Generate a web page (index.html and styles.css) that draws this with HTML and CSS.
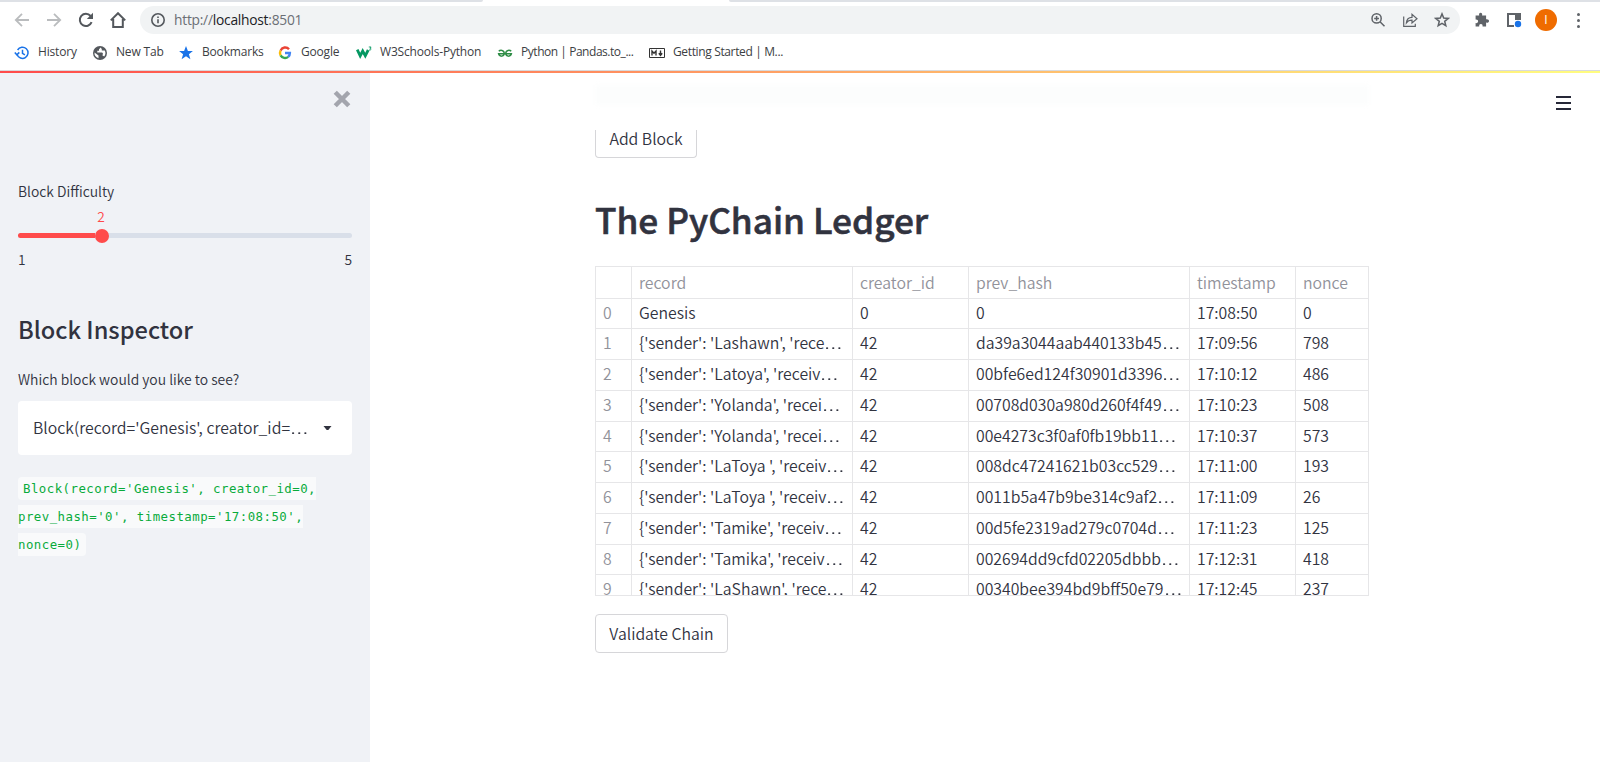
FILE: index.html
```html
<!DOCTYPE html>
<html lang="en">
<head>
<meta charset="utf-8">
<title>PyChain</title>
<link rel="stylesheet" href="styles.css">
</head>
<body>
<div class="tabstrip"><div class="tab-side tab-left"></div><div class="tab-gap"></div><div class="tab-side tab-right"></div></div>
<div class="toolbar">
  <svg class="ic nav-off" viewBox="0 0 16 16"><path d="M15 8H2M8 1.8 1.8 8 8 14.2"/></svg>
  <svg class="ic nav-off" viewBox="0 0 16 16"><path d="M1 8h13M8 1.8 14.2 8 8 14.2"/></svg>
  <svg class="ic nav" viewBox="0 0 16 16"><path d="M13.600 10.200A6.1 6.1 0 1 1 12.6 4"/><path class="fill" d="M15 .8V7H8.8z"/></svg>
  <svg class="ic nav" viewBox="0 0 16 16"><path d="M.8 8.4 8 1.2l7.2 7.2M3.2 7v8h9.6V7"/></svg>
  <div class="omnibox">
    <svg class="info" viewBox="0 0 16 16"><circle cx="8" cy="8" r="6.2"/><path d="M8 7.2v4M8 4.4v1.7"/></svg>
    <div class="url">http://<b>localhost</b>:8501</div>
    <svg class="oi" viewBox="0 0 16 16"><circle cx="6.6" cy="6.4" r="4.6"/><path d="M10 9.8l4.5 4.5M4.2 6.4H9M6.6 4v4.8"/></svg>
    <svg class="oi share" viewBox="0 0 16 16"><path d="M1.7 4.6v9.7h11.6v-2.6M4.4 10.8c.3-3.7 2.2-5.4 5.6-5.5V2.4L15 6.700l-5 4.200V8.200c-2.400 0-4.200.6-5.600 2.600z"/></svg>
    <svg class="oi star" viewBox="0 0 16 16"><path d="M8 1.900 9.700 6.100l4.500.3-3.500 2.900 1.100 4.400L8 11.300l-3.800 2.400 1.100-4.400L1.800 6.400l4.500-.3z"/></svg>
  </div>
  <svg class="ext" viewBox="0 0 16 16"><path d="M1.600 3.500h3.600C4.700 1.700 5.400.7 6.600.7S8.500 1.700 8.100 3.500h4v3.700c1.900-.3 2.900.5 2.900 1.700s-1 2-2.900 1.700v4H8.600c.2-1.800-.5-2.600-1.700-2.600s-1.900.8-1.700 2.600H1.600v-3.500c1.700.2 2.500-.6 2.500-1.800s-.8-2-2.500-1.800z"/></svg>
  <svg class="panel" viewBox="0 0 16 16"><path d="M1 2h12v5M8 14H2V2"/><path class="pfill" d="M9 1h6v7H9z"/><circle cx="12" cy="12" r="3.200"/></svg>
  <div class="avatar">I</div>
  <div class="dots"><i></i><i></i><i></i></div>
</div>
<div class="bookmarks">
  <div class="bm b1"><svg viewBox="0 0 16 16"><path d="M3.100 9.500A5.600 5.600 0 1 0 3.600 5M.8 7.400l2.100 2.400 2.400-2.400M8.500 4.800v3.500l2.400 1.600" fill="none" stroke="#1a73e8" stroke-width="1.500"/></svg><span>History</span></div>
  <div class="bm b2"><svg viewBox="0 0 16 16"><circle cx="8" cy="8" r="7" fill="#54585d"/><path d="M8.800 2.500 7 4.300v1.500H5.300v1.700H10c1.200.6 1.200 2 .3 2.700l1.900 1.300c1.500-1.800 1.600-4 .6-6H9.800V4.200zM2.500 7.600l4 2.900v2.700c-2.800-.7-4.300-2.900-4-5.600z" fill="#fff"/></svg><span>New Tab</span></div>
  <div class="bm b3"><svg viewBox="0 0 16 16"><path d="M8 1l1.900 5h5l-4 3.200 1.500 5L8 11.300l-4.400 2.900 1.500-5L1.100 6h5z" fill="#1a73e8"/></svg><span>Bookmarks</span></div>
  <div class="bm b4"><svg viewBox="0 0 16 16" fill="none" stroke-width="2.400"><path d="M12 4.200A5 5 0 0 0 3.600 5.600" stroke="#ea4335"/><path d="M3.600 5.600a5 5 0 0 0 0 4.800" stroke="#fbbc05"/><path d="M3.600 10.400a5 5 0 0 0 7.600 1.400" stroke="#34a853"/><path d="M11.200 11.800A5 5 0 0 0 12.900 8H8" stroke="#4285f4"/></svg><span>Google</span></div>
  <div class="bm b5"><svg viewBox="0 0 16 16"><path d="M1.200 4.600l3 6.200L6.700 6l2.600 4.800L12.200 5" fill="none" stroke="#059862" stroke-width="2.800"/><path d="M12.800 2h2.300L14 3.300c1.700 0 1.500 2-1 1.700" fill="none" stroke="#059862" stroke-width=".9"/></svg><span>W3Schools-Python</span></div>
  <div class="bm b6"><svg viewBox="0 0 16 16" fill="none" stroke="#2f8d46" stroke-width="1.500"><path d="M1.800 6.300C3 5 7.200 4.600 7.200 8.300c0 3.700-5 3.700-5.600.4h12.800c-.6 3.300-5.600 3.300-5.600-.4 0-3.700 4.200-3.300 5.400-2"/></svg><span>Python | Pandas.to_...</span></div>
  <div class="bm b7"><svg viewBox="0 0 16 16"><path d="M.5 3.500h15v9H.5z" fill="none" stroke="#333" stroke-width="1"/><path d="M3 10.500V6l2 2.300L7 6v4.500M11.500 5.500v4M9.800 8.300l1.700 2 1.700-2" fill="none" stroke="#333" stroke-width="1.400"/></svg><span>Getting Started | M...</span></div>
</div>
<div class="decoration"></div>
<div class="app">
  <aside class="sidebar">
    <svg class="close" viewBox="0 0 16 16"><path d="M2 2l12 12M14 2 2 14"/></svg>
    <div class="label l1">Block Difficulty</div>
    <div class="value">2</div>
    <div class="slider"><div class="done"></div><div class="thumb"></div></div>
    <div class="range"><span>1</span><span>5</span></div>
    <h2>Block Inspector</h2>
    <div class="label l2">Which block would you like to see?</div>
    <div class="select"><span>Block(record='Genesis', creator_id=<em>…</em></span><svg viewBox="0 0 8 5"><path d="M0 0h8L4.800 4H3.200z"/></svg></div>
    <div class="codewrap"><code>Block(record='Genesis', creator_id=0,<br>prev_hash='0', timestamp='17:08:50',<br>nonce=0)</code></div>
  </aside>
  <main class="main">
    <div class="haze"></div>
    <div class="btn add">Add Block</div>
    <div class="burger"><i></i><i></i><i></i></div>
    <h1>The PyChain Ledger</h1>
    <div class="table">
      <div class="row head"><div></div><div>record</div><div>creator_id</div><div>prev_hash</div><div>timestamp</div><div>nonce</div></div>
      <div class="row"><div>0</div><div>Genesis</div><div>0</div><div>0</div><div>17:08:50</div><div>0</div></div>
      <div class="row"><div>1</div><div>{'sender': 'Lashawn', 'rece<em>…</em></div><div>42</div><div>da39a3044aab440133b45<em>…</em></div><div>17:09:56</div><div>798</div></div>
      <div class="row"><div>2</div><div>{'sender': 'Latoya', 'receiv<em>…</em></div><div>42</div><div>00bfe6ed124f30901d3396<em>…</em></div><div>17:10:12</div><div>486</div></div>
      <div class="row"><div>3</div><div>{'sender': 'Yolanda', 'recei<em>…</em></div><div>42</div><div>00708d030a980d260f4f49<em>…</em></div><div>17:10:23</div><div>508</div></div>
      <div class="row"><div>4</div><div>{'sender': 'Yolanda', 'recei<em>…</em></div><div>42</div><div>00e4273c3f0af0fb19bb11<em>…</em></div><div>17:10:37</div><div>573</div></div>
      <div class="row"><div>5</div><div>{'sender': 'LaToya ', 'receiv<em>…</em></div><div>42</div><div>008dc47241621b03cc529<em>…</em></div><div>17:11:00</div><div>193</div></div>
      <div class="row"><div>6</div><div>{'sender': 'LaToya ', 'receiv<em>…</em></div><div>42</div><div>0011b5a47b9be314c9af2<em>…</em></div><div>17:11:09</div><div>26</div></div>
      <div class="row"><div>7</div><div>{'sender': 'Tamike', 'receiv<em>…</em></div><div>42</div><div>00d5fe2319ad279c0704d<em>…</em></div><div>17:11:23</div><div>125</div></div>
      <div class="row"><div>8</div><div>{'sender': 'Tamika', 'receiv<em>…</em></div><div>42</div><div>002694dd9cfd02205dbbb<em>…</em></div><div>17:12:31</div><div>418</div></div>
      <div class="row"><div>9</div><div>{'sender': 'LaShawn', 'rece<em>…</em></div><div>42</div><div>00340bee394bd9bff50e79<em>…</em></div><div>17:12:45</div><div>237</div></div>
    </div>
    <div class="btn validate">Validate Chain</div>
  </main>
</div>
</body>
</html>
```
FILE: styles.css
```css
* { box-sizing: border-box; }
body { margin: 0; width: 1600px; height: 762px; overflow: hidden; display: flex; flex-direction: column; background: #fff; color: #31333f; font-family: "Noto Sans CJK SC", "Noto Sans", sans-serif; font-size: 15.800px; font-weight: 350; }
em { display: inline-block; font-family: "Noto Sans", sans-serif; font-style: normal; font-size: 15.76px; line-height: 1; transform: scaleX(1.6); transform-origin: left; margin-right: 5px; font-weight: 300; }
.tabstrip { display: flex; height: 2px; flex: none; }
.tab-side { background: #dee1e6; }
.tab-left { width: 483px; border-radius: 0 0 3px 0; }
.tab-gap { width: 246px; }
.tab-right { flex: 1; border-radius: 0 0 0 3px; }
.toolbar { height: 36px; flex: none; display: flex; align-items: center; padding: 0 17px 0 14px; }
.ic { width: 16px; height: 16px; margin-right: 16px; fill: none; stroke-width: 1.800; }
.nav-off { stroke: #babcbe; }
.nav { stroke: #54585d; stroke-width: 2; }
.nav .fill { fill: #54585d; stroke: none; }
.omnibox { width: 1320px; height: 28px; margin-left: -2px; border-radius: 14px; background: #f1f3f4; display: flex; align-items: center; padding: 0 10px; }
.info { width: 16px; height: 16px; fill: none; stroke: #54585d; stroke-width: 1.600; }
.url { flex: 1; margin-left: 8px; font-family: "Open Sans", sans-serif; font-weight: 400; font-size: 13.800px; letter-spacing: -.25px; color: #6b6f74; line-height: 20px; }
.url b { font-weight: 400; color: #202124; }
.oi { width: 16px; height: 16px; margin-left: 16px; fill: none; stroke: #5f6368; stroke-width: 1.500; }
.share { stroke-width: 1.200; }
.ext { width: 16px; height: 16px; margin-left: 14px; fill: #5f6368; }
.panel { width: 16px; height: 16px; margin-left: 16px; fill: none; stroke: #5f6368; stroke-width: 2; }
.panel .pfill { fill: #5f6368; stroke: none; }
.panel circle { fill: #1a73e8; stroke: none; }
.avatar { width: 22px; height: 22px; margin-left: 13px; border-radius: 50%; background: #ef6c00; color: #fff; font: 12px/22px "Open Sans", sans-serif; text-align: center; }
.dots { margin-left: 20px; display: flex; flex-direction: column; gap: 3px; }
.dots i { width: 3px; height: 3px; border-radius: 50%; background: #5f6368; }
.bookmarks { height: 32px; flex: none; display: flex; align-items: center; padding-left: 14px; }
.bm { display: flex; align-items: center; font: 12px/18px "Open Sans", sans-serif; color: #3c4043; white-space: nowrap; height: 28px; padding-bottom: 2px; letter-spacing: -.18px; }
.bm svg { width: 16px; height: 16px; flex: none; }
.bm span { margin-left: 8px; padding-bottom: 2px; }
.b1 { width: 78px; } .b2 { width: 86px; } .b3 { width: 99px; } .b4 { width: 79px; } .b5 { width: 141px; } .b6 { width: 152px; letter-spacing: -.46px; }
.b7 { letter-spacing: -.36px; }
.decoration { height: 3px; flex: none; border-top: 1px solid #d9dadd; background: linear-gradient(90deg, #ff4b4b, #fffd80); background-clip: padding-box; }
.app { flex: 1; display: flex; min-height: 0; }
.sidebar { width: 370px; flex: none; background: #f0f2f6; padding: 17px 18px 0; display: flex; flex-direction: column; }
.close { width: 18px; height: 18px; margin: 0 1px 0 auto; fill: none; stroke: #a3a5ad; stroke-width: 4; }
.label { font-size: 13.900px; line-height: 24px; }
.l1 { margin-top: 71px; }
.value { width: 24px; margin: 2px 0 0 71px; line-height: 22px; font-size: 13.800px; text-align: center; color: #ff4b4b; }
.slider { height: 5px; background: #d9dfe9; border-radius: 3px; display: flex; align-items: center; margin-top: 6px; }
.done { width: 77px; height: 5px; border-radius: 3px 0 0 3px; background: #ff4b4b; }
.thumb { width: 14px; height: 14px; border-radius: 50%; background: #ff4b4b; flex: none; }
.range { display: flex; justify-content: space-between; font-size: 13.800px; line-height: 24px; margin-top: 9px; }
h2 { margin: 38px 0 0; font-size: 23.600px; line-height: 40px; font-weight: 500; }
.l2 { margin-top: 18px; }
.select { height: 54px; margin-top: 10px; background: #fff; border-radius: 4px; display: flex; align-items: center; padding: 0 20px 0 15px; justify-content: space-between; white-space: nowrap; }
.select > span { padding-bottom: 1px; letter-spacing: .03px; }
.select svg { width: 9px; height: 5px; fill: #31333f; }
.codewrap { margin-top: 20px; line-height: 28px; font-size: 12.400px; font-family: "DejaVu Sans Mono", monospace; }
code { font-family: "DejaVu Sans Mono", monospace; font-weight: 400; font-size: 12.400px; letter-spacing: .46px; color: #09ab3b; background: #f9fafb; padding: 4px 5px; border-radius: 4px; white-space: nowrap; }
.main { flex: 1; position: relative; padding: 12px 0 0 225px; }
.haze { width: 774px; height: 20px; background: #fcfdfd; filter: blur(2px); }
.btn { border: 1px solid #d6d6d9; border-radius: 4px; display: flex; align-items: center; justify-content: center; white-space: nowrap; }
.add { width: 102px; height: 28px; margin-top: 25px; border-top: 0; border-radius: 0 0 4px 4px; padding-bottom: 10px; line-height: 17px; }
.burger { position: absolute; right: 29px; top: 23px; width: 15px; display: flex; flex-direction: column; gap: 4px; }
.burger i { height: 2px; background: #262838; }
h1 { margin: 35px 0 0; font-size: 35.200px; line-height: 52px; font-weight: 500; -webkit-text-stroke: .6px #31333f; }
.table { width: 774px; height: 330px; margin-top: 21px; border: 1px solid #e6e6e8; overflow: hidden; }
.row { display: grid; grid-template-columns: 36px 221px 116px 221px 106px 72px; height: 30.750px; }
.row > div { border-right: 1px solid #e6e6e8; border-bottom: 1px solid #e6e6e8; padding-left: 7px; line-height: 28px; white-space: nowrap; overflow: hidden; }
.row > div:last-child { border-right: 0; }
.row > div:first-child { color: #91929a; }
.head.row { height: 31.700px; color: #91929a; }
.head.row > div { line-height: 31px; }
.validate { width: 133px; height: 39px; margin-top: 18px; }
```
